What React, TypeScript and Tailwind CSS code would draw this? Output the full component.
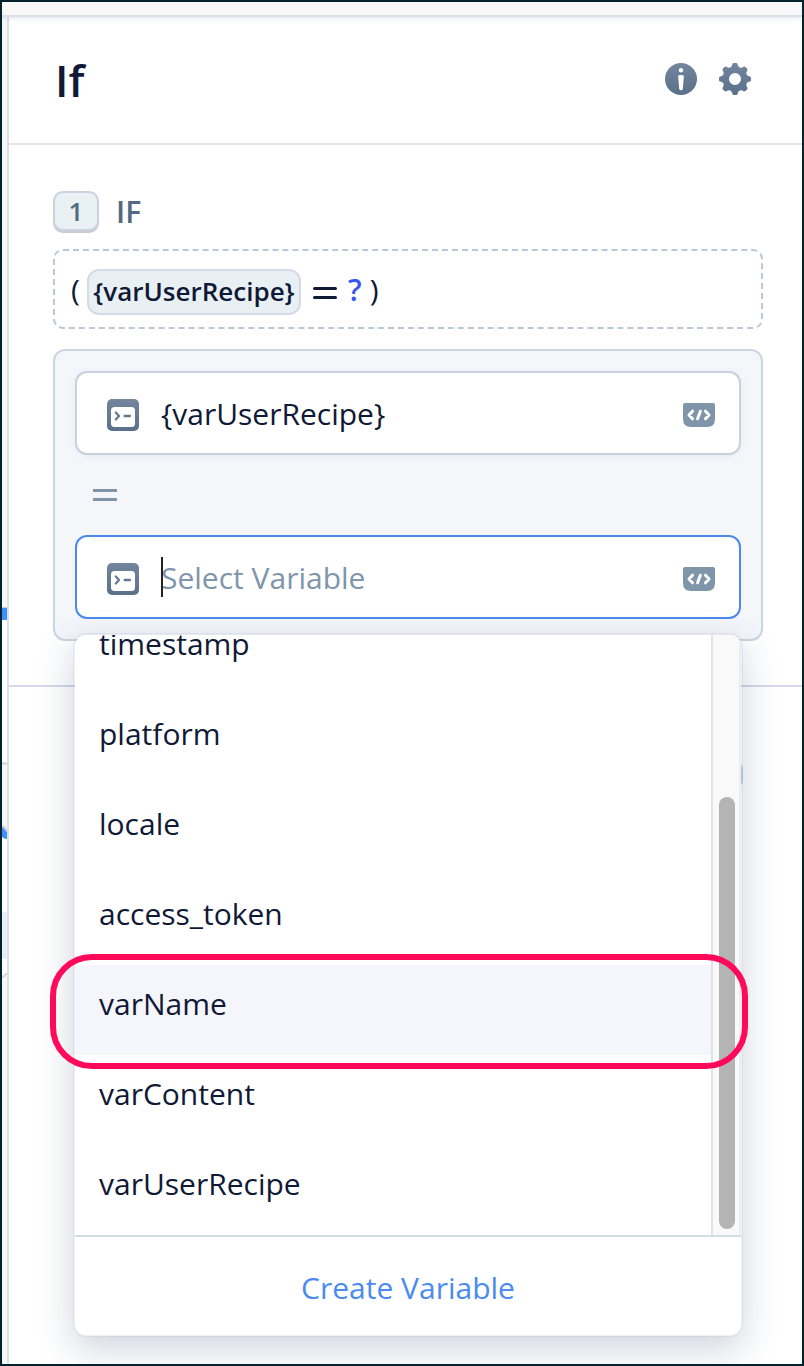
import React from "react";

const variables = ["timestamp", "platform", "locale", "access_token", "varName", "varContent", "varUserRecipe"];

function InfoIcon() {
  return (
    <svg width="32" height="32" viewBox="0 0 32 32">
      <defs>
        <linearGradient id="slate" x1="0" y1="0" x2="0" y2="1">
          <stop offset="0" stopColor="#74859e" />
          <stop offset="1" stopColor="#5a7089" />
        </linearGradient>
      </defs>
      <circle cx="16" cy="16" r="16" fill="url(#slate)" />
      <circle cx="16" cy="7.3" r="2.2" fill="#fff" />
      <path d="M13.1 12.6Q16 11.2 18.9 12.6L17.8 26Q17.6 27.2 16 27.2T14.2 26Z" fill="#fff" />
    </svg>
  );
}

function GearIcon() {
  return (
    <svg width="32" height="32" viewBox="0 0 32 32">
      <path
        fill="url(#slate)"
        fillRule="evenodd"
        d="M13.4 1.2Q13.6 0 14.8 0H17.2Q18.4 0 18.6 1.2Q18.9 3.8 20.8 4.5Q22.6 5.2 24.6 3.7Q25.5 3.1 26.4 3.9L28.1 5.6Q28.9 6.5 28.3 7.4Q26.8 9.4 27.5 11.2Q28.2 13.1 30.8 13.4Q32 13.6 32 14.8V17.2Q32 18.4 30.8 18.6Q28.2 18.9 27.5 20.8Q26.8 22.6 28.3 24.6Q28.9 25.5 28.1 26.4L26.4 28.1Q25.5 28.9 24.6 28.3Q22.6 26.8 20.8 27.5Q18.9 28.2 18.6 30.8Q18.4 32 17.2 32H14.8Q13.6 32 13.4 30.8Q13.1 28.2 11.2 27.5Q9.4 26.8 7.4 28.3Q6.5 28.9 5.6 28.1L3.9 26.4Q3.1 25.5 3.7 24.6Q5.2 22.6 4.5 20.8Q3.8 18.9 1.2 18.6Q0 18.4 0 17.2V14.8Q0 13.6 1.2 13.4Q3.8 13.1 4.5 11.2Q5.2 9.4 3.7 7.4Q3.1 6.5 3.9 5.6L5.6 3.9Q6.5 3.1 7.4 3.7Q9.4 5.2 11.2 4.5Q13.1 3.8 13.4 1.2ZM16 10A6 6 0 1 0 16 22A6 6 0 1 0 16 10Z"
      />
    </svg>
  );
}

function TerminalIcon() {
  return (
    <svg width="32" height="32" viewBox="0 0 32 32" className="shrink-0">
      <rect width="32" height="32" rx="5" fill="url(#slate)" />
      <rect x="4" y="8" width="24" height="20" rx="3.5" fill="#fff" />
      <path d="M8.8 13.5L12 17L8.8 20.5" fill="none" stroke="#647991" strokeWidth="2.2" strokeLinecap="round" strokeLinejoin="round" />
      <path d="M17.8 17H22.8" stroke="#647991" strokeWidth="2.6" strokeLinecap="round" />
    </svg>
  );
}

function CodeIcon() {
  return (
    <svg width="32" height="24" viewBox="0 0 32 24" className="shrink-0">
      <path d="M2 0H30Q32 0 32 2V16Q32 24 24 24H8Q0 24 0 16V2Q0 0 2 0Z" fill="#7f95aa" />
      <g fill="none" stroke="#fff" strokeWidth="3" strokeLinecap="round" strokeLinejoin="round">
        <path d="M9.5 8.2L6 12L9.5 15.8M22.5 8.2L26 12L22.5 15.8" />
        <path d="M17.4 8.2L14.6 15.8" />
      </g>
    </svg>
  );
}

function Field({ active = false, children }: { active?: boolean; children: React.ReactNode }) {
  return (
    <div
      className={
        active
          ? "flex h-[84px] items-center rounded-xl border-2 border-[#4b8bf0] bg-white pl-[30px] pr-6 pt-1"
          : "flex h-[84px] items-center rounded-xl border-2 border-[#c8d1dd] bg-white pl-[30px] pr-6 pt-1 shadow-[0_1px_6px_rgba(60,80,110,0.07)]"
      }
    >
      <TerminalIcon />
      <div className="relative mb-[2px] ml-[22px] flex-1 text-[30px] leading-[40px]">{children}</div>
      <CodeIcon />
    </div>
  );
}

function CanvasStrip() {
  return (
    <div className="relative w-[7px] shrink-0 overflow-hidden border-r-2 border-[#dae2e6] bg-[#f7f7f7]">
      <div className="absolute left-0 top-[590px] h-[157px] w-[5px] bg-white" />
      <div className="absolute left-0 top-[590px] h-[13px] w-[5px] border-t border-[#c6cbd3] bg-[#3b91ff]" />
      <div className="absolute left-0 top-[745px] h-[3px] w-[5px] bg-[#dddddd]" />
      <svg className="absolute left-0 top-[805px]" width="5" height="157" viewBox="0 0 5 157">
        <path d="M0 7Q3 9 5 13V157H0Z" fill="#fff" />
        <path d="M0 5Q3 7 5 10V17Q2 17 0 15Z" fill="#3b91ff" />
        <path d="M0 4Q3 5 5 9" fill="none" stroke="#d0d0d0" strokeWidth="2" />
        <rect y="90" width="5" height="47" fill="#e9eef4" />
        <path d="M0 155Q3 154 5 151V157H0Z" fill="#f7f7f7" />
        <path d="M0 155Q3 154 5 151" fill="none" stroke="#d8d8d8" strokeWidth="2" />
      </svg>
    </div>
  );
}

function VariableMenu() {
  return (
    <div className="absolute left-[-2px] top-[284px] w-[670px] rounded-[13px] border-2 border-[#a9b6d0]/20 bg-white bg-clip-padding shadow-[0_12px_36px_rgba(40,60,100,0.22)]">
      <div className="overflow-hidden rounded-[11px]">
        <div className="flex h-[600px]">
          <ul className="flex flex-1 flex-col justify-end overflow-hidden">
            {variables.map((name) => (
              <li
                key={name}
                className={
                  name === "varName"
                    ? "h-[90px] shrink-0 bg-[#f5f6fb] pl-6 text-[30px] leading-[78px]"
                    : "h-[90px] shrink-0 pl-6 text-[30px] leading-[78px]"
                }
              >
                {name}
              </li>
            ))}
          </ul>
          <div className="flex w-[30px] items-end border-l-2 border-r-2 border-l-[#e2e2e2] border-r-[#ededed] bg-[#f9f9f9] pb-[6px] pl-[6px]">
            <div className="h-[432px] w-4 rounded-full bg-[#b4b4b4]" />
          </div>
        </div>
        <div className="flex h-[100px] items-center justify-center border-t-2 border-[#d2dfe2] pt-1 text-[30px] leading-[40px] text-[#4b8bf0]">
          Create Variable
        </div>
      </div>
      <div className="absolute left-[-25px] top-[319px] h-[115px] w-[698px] rounded-[42px] border-[6px] border-[#ff0a5a]" />
    </div>
  );
}

export default function App() {
  return (
    <div className="flex h-[1366px] w-[804px] flex-col overflow-hidden border-2 border-[#04222e] bg-white font-['Open_Sans','Noto_Sans',sans-serif] text-[#101935]">
      <div className="z-10 h-[15px] shrink-0 border-b-2 border-[#dbe1e8] bg-[#f7f7f7] shadow-[0_1px_5px_rgba(60,80,120,0.16)]" />
      <div className="flex min-h-0 flex-1">
        <CanvasStrip />
        <main className="min-w-0 flex-1">
          <header className="flex h-32 items-center justify-between border-b-2 border-[#e4e8ee] pl-[46px] pr-[51px]">
            <h1 className="text-[44px] font-semibold leading-[60px]">If</h1>
            <div className="mb-[3px] flex gap-[22px]">
              <InfoIcon />
              <GearIcon />
            </div>
          </header>
          <section className="h-[542px] border-b-2 border-[#d5d8e8] pl-11 pr-[39px] pt-[46px]">
            <div className="flex h-[42px] items-center">
              <div className="flex h-10 w-[46px] items-center justify-center self-start rounded-[10px] border-2 border-[#ccd2e2] bg-[#e9f1f5] text-[26px] font-semibold text-[#536981] shadow-[0_2px_0_#c9cbd0]">
                1
              </div>
              <span className="ml-[17px] text-[30px] font-semibold leading-[40px] text-[#536981]">IF</span>
            </div>
            <div className="mt-4 flex h-20 items-center rounded-[10px] border-2 border-dashed border-[#b9c8d9] pl-4 pt-[5px] text-[30px] leading-[40px]">
              <span className="mb-1 w-2">(</span>
              <span className="ml-2 flex h-[46px] w-[214px] items-center justify-center rounded-xl border-2 border-[#d5d9e8] bg-[#e9f0f4] pb-[2px] text-[26px] font-semibold">
                {"{varUserRecipe}"}
              </span>
              <div className="ml-3 mt-[2px] flex w-6 flex-col gap-[6px]">
                <div className="h-[3px] rounded-sm bg-[#101935]" />
                <div className="h-[3px] rounded-sm bg-[#101935]" />
              </div>
              <span className="mb-1 ml-[11px] font-semibold text-[#3b55f5]">?</span>
              <span className="mb-1 ml-2">)</span>
            </div>
            <div className="mt-5 h-[292px] rounded-xl border-2 border-[#cbd6e2] bg-[#f4f6fa] p-5">
              <Field>{"{varUserRecipe}"}</Field>
              <div className="ml-[18px] flex h-20 w-6 flex-col justify-center gap-[6px]">
                <div className="h-[3px] bg-[#7f95aa]" />
                <div className="h-[3px] bg-[#7f95aa]" />
              </div>
              <div className="relative">
                <Field active>
                  <span className="text-[#7f95aa]">Select Variable</span>
                  <span className="absolute left-0 top-[-1px] h-10 w-[2px] bg-[#222222]" />
                </Field>
                <div className="absolute left-[656px] top-[228px] h-6 w-3 rounded-full bg-[#c3cbdf]" />
                <div className="absolute left-0 top-[-186px]">
                  <VariableMenu />
                </div>
              </div>
            </div>
          </section>
        </main>
      </div>
    </div>
  );
}
